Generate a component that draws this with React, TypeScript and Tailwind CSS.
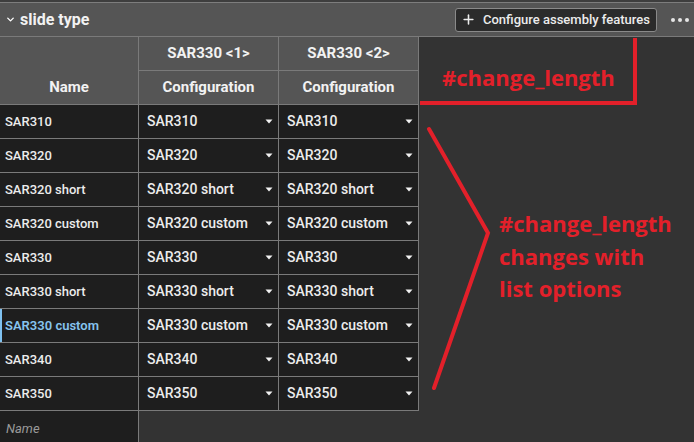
import { ChevronDown, Plus } from 'lucide-react'

const rows = [
  'SAR310',
  'SAR320',
  'SAR320 short',
  'SAR320 custom',
  'SAR330',
  'SAR330 short',
  'SAR330 custom',
  'SAR340',
  'SAR350',
]

const selected = 'SAR330 custom'

function Caret() {
  return (
    <svg width="8" height="5" viewBox="0 0 8 5" className="shrink-0">
      <path d="M0.5 0.5 H7.5 L4 4.5 Z" fill="#f2f2f2" />
    </svg>
  )
}

function SelectCell({ value }: { value: string }) {
  return (
    <div className="bg-[#1e1e1e] h-[33px] flex items-center justify-between pl-2 pr-[5px] text-[14px] font-medium text-[#ececec]">
      <span>{value}</span>
      <Caret />
    </div>
  )
}

export default function App() {
  return (
    <div
      className="relative w-[694px] h-[442px] overflow-hidden bg-[#333333] text-[#ececec]"
      style={{ fontFamily: 'Roboto, "Noto Sans", sans-serif' }}
    >
      <div className="h-[2px] bg-[#3e3e3e]" />
      <div className="h-px bg-[#7d7d7d]" />

      {/* section header */}
      <div className="h-[34px] bg-[#555555] border-b border-[#7a7a7a] flex items-center pl-[5px] pr-[5px]">
        <ChevronDown className="w-[11px] h-[11px] text-white" strokeWidth={3} />
        <span className="ml-[4px] text-[16px] font-bold text-[#f2f2f2]">slide type</span>
        <div className="ml-auto flex items-center">
          <button className="h-[24px] w-[202px] flex items-center rounded-[3px] border border-[#8a8a8a] bg-[#2b2b2b] pl-[5px] text-[13px] font-medium text-[#ececec]">
            <Plus className="w-[15px] h-[15px]" strokeWidth={2.5} />
            <span className="ml-[7px]">Configure assembly features</span>
          </button>
          <div className="ml-[14px] flex gap-[3px] items-center">
            <span className="w-[4px] h-[4px] rounded-full bg-[#e6e6e6]" />
            <span className="w-[4px] h-[4px] rounded-full bg-[#e6e6e6]" />
            <span className="w-[4px] h-[4px] rounded-full bg-[#e6e6e6]" />
          </div>
        </div>
      </div>

      {/* table */}
      <div className="w-[419px] bg-[#7a7a7a] pr-px pb-px">
        <div className="grid grid-cols-[138px_139px_139px] gap-px">
          <div className="row-span-2 bg-[#555555] flex items-end justify-center pb-[6px] text-[15px] font-bold text-[#f2f2f2]">
            Name
          </div>
          <div className="h-[33px] bg-[#555555] flex items-center justify-center text-[15px] font-bold text-[#f2f2f2]">
            SAR330 &lt;1&gt;
          </div>
          <div className="h-[33px] bg-[#555555] flex items-center justify-center text-[15px] font-bold text-[#f2f2f2]">
            SAR330 &lt;2&gt;
          </div>
          <div className="h-[33px] bg-[#555555] flex items-center justify-center text-[15px] font-bold text-[#f2f2f2]">
            Configuration
          </div>
          <div className="h-[33px] bg-[#555555] flex items-center justify-center text-[15px] font-bold text-[#f2f2f2]">
            Configuration
          </div>

          {rows.map((r) => (
            <div key={r} className="contents">
              <div
                className={
                  r === selected
                    ? 'h-[33px] bg-[#1e1e1e] flex items-center pl-[3px] border-l-[2px] border-[#7fc1f0] text-[13px] font-semibold text-[#86c3ee]'
                    : 'h-[33px] bg-[#1e1e1e] flex items-center pl-[5px] text-[13px] font-medium text-[#ececec]'
                }
              >
                {r}
              </div>
              <SelectCell value={r} />
              <SelectCell value={r} />
            </div>
          ))}
        </div>
      </div>

      {/* new row input */}
      <div className="w-[139px] h-[32px] bg-[#1e1e1e] border-r border-[#7a7a7a] flex items-center pl-[6px] pt-[3px] text-[13px] italic text-[#9a9a9a]">
        Name
      </div>

      {/* red annotations */}
      <svg className="absolute left-0 top-0 pointer-events-none" width="694" height="442">
        <path d="M420 103 H635 V38" stroke="#e3202a" strokeWidth="4" fill="none" />
        <path d="M429 129 L488 233 L434 388" stroke="#e3202a" strokeWidth="4" fill="none" strokeLinecap="round" />
      </svg>
      <div
        className="absolute left-[442px] top-[62px] text-[22px] font-bold text-[#e3202a] leading-[30px]"
        style={{ fontFamily: '"Open Sans", sans-serif' }}
      >
        #change_length
      </div>
      <div
        className="absolute left-[499px] top-[207px] text-[22px] font-bold text-[#e3202a] leading-[32.5px]"
        style={{ fontFamily: '"Open Sans", sans-serif' }}
      >
        #change_length
        <br />
        changes with
        <br />
        list options
      </div>
    </div>
  )
}
